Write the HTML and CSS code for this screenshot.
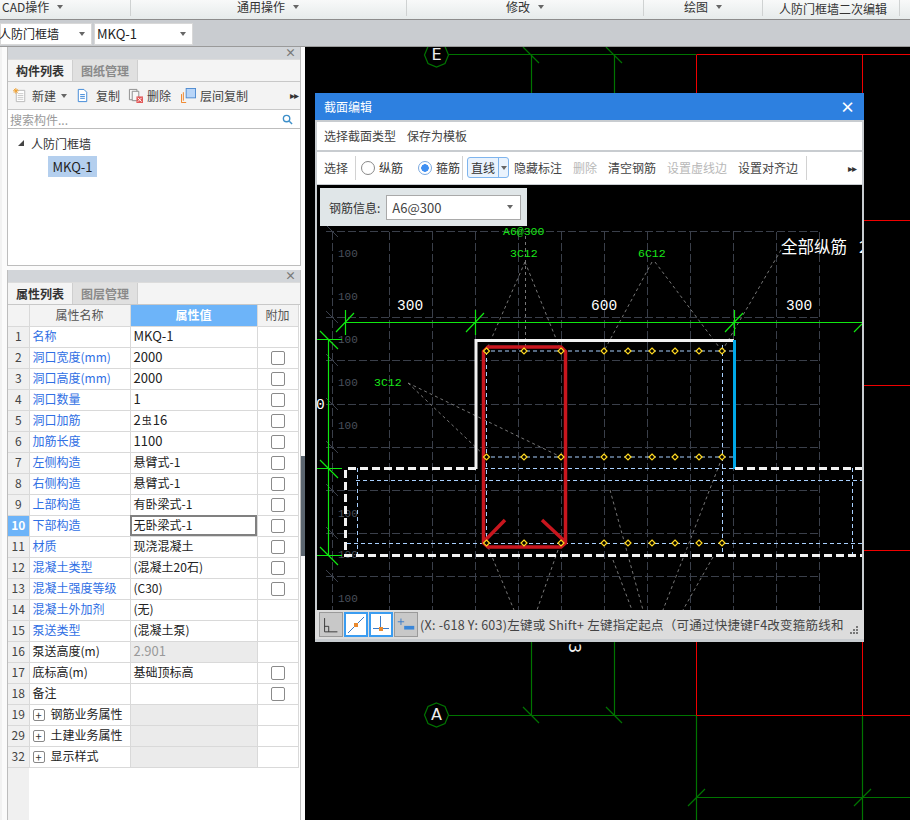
FILE: index.html
```html
<!DOCTYPE html>
<html lang="zh-CN">
<head>
<meta charset="utf-8">
<title>人防门框墙二次编辑</title>
<link rel="stylesheet" href="styles.css">
</head>
<body>
<div class="ribbon">
  <div class="rib rib-a"><span>CAD操作</span><i class="caret"></i></div>
  <div class="rib rib-b"><span>通用操作</span><i class="caret"></i></div>
  <div class="rib rib-c"><span>修改</span><i class="caret"></i></div>
  <div class="rib rib-d"><span>绘图</span><i class="caret"></i></div>
  <div class="rib rib-e"><span>人防门框墙二次编辑</span></div>
</div>
<div class="selectors">
  <div class="sel sel-type"><span>人防门框墙</span><i class="caret"></i></div>
  <div class="sel sel-name"><span>MKQ-1</span><i class="caret"></i></div>
</div>
<div class="main">
  <aside class="side">
    <section class="panel panel-top">
      <div class="panel-title"><span class="x">×</span></div>
      <div class="tabs"><div class="tab on">构件列表</div><div class="tab">图纸管理</div></div>
      <div class="tools">
        <div class="tool t-new">
          <svg class="ico" viewBox="0 0 16 16"><path class="doc" d="M3.500 2.500h9v12h-9z"/><path class="docl" d="M5 6h6M5 8h6M5 10h6M5 12h6"/><path class="star" d="M3 0v6M0 3h6M1 1l4 4M5 1l-4 4"/></svg>
          <span>新建</span><i class="caret"></i>
        </div>
        <div class="tool t-copy">
          <svg class="ico" viewBox="0 0 16 16"><path class="blue" d="M3.500 1.500h6l3 3v10h-9z"/><path class="blue" d="M5.500 7h5M5.500 9h5M5.500 11h5"/></svg>
          <span>复制</span>
        </div>
        <div class="tool t-del">
          <svg class="ico" viewBox="0 0 16 16"><path class="grayl" d="M1.500 1.500h8v11h-8z"/><path class="grayl" d="M4.500 3.500h7v10h-7z"/><rect class="redb" x="9" y="9" width="7" height="7"/><path class="wh" d="M10.500 10.500l4 4M14.500 10.500l-4 4"/></svg>
          <span>删除</span>
        </div>
        <div class="tool t-floor">
          <svg class="ico" viewBox="0 0 16 16"><path class="orange" d="M.5 15.500h5M.5 15.500v-9M2.500 13.500v-9"/><rect class="lblue" x="5.500" y=".5" width="10" height="10"/></svg>
          <span>层间复制</span>
        </div>
        <div class="more">▸▸</div>
      </div>
      <div class="search"><span>搜索构件...</span>
        <svg class="lens" viewBox="0 0 12 12"><circle cx="5" cy="5" r="3.500"/><path d="M8 8l3 3"/></svg>
      </div>
      <div class="tree">
        <div class="node"><i class="tri"></i><span>人防门框墙</span></div>
        <div class="leaf">MKQ-1</div>
      </div>
    </section>
    <section class="panel panel-bottom">
      <div class="panel-title"><span class="x">×</span></div>
      <div class="tabs"><div class="tab on">属性列表</div><div class="tab">图层管理</div></div>
      <table class="props">
        <colgroup><col class="c1"><col class="c2"><col class="c3"><col class="c4"></colgroup>
        <thead><tr><th class="n"></th><th>属性名称</th><th class="cur">属性值</th><th>附加</th></tr></thead>
        <tbody>
          <tr><td class="n">1</td><td class="k">名称</td><td class="num">MKQ-1</td><td></td></tr>
          <tr><td class="n">2</td><td class="k">洞口宽度(mm)</td><td class="num">2000</td><td><i class="cb"></i></td></tr>
          <tr><td class="n">3</td><td class="k">洞口高度(mm)</td><td class="num">2000</td><td><i class="cb"></i></td></tr>
          <tr><td class="n">4</td><td class="k">洞口数量</td><td class="num">1</td><td><i class="cb"></i></td></tr>
          <tr><td class="n">5</td><td class="k">洞口加筋</td><td class="num">2<span class="rebar">虫</span>16</td><td><i class="cb"></i></td></tr>
          <tr><td class="n">6</td><td class="k">加筋长度</td><td class="num">1100</td><td><i class="cb"></i></td></tr>
          <tr><td class="n">7</td><td class="k">左侧构造</td><td>悬臂式-1</td><td><i class="cb"></i></td></tr>
          <tr><td class="n">8</td><td class="k">右侧构造</td><td>悬臂式-1</td><td><i class="cb"></i></td></tr>
          <tr><td class="n">9</td><td class="k">上部构造</td><td>有卧梁式-1</td><td><i class="cb"></i></td></tr>
          <tr><td class="n act">10</td><td class="k">下部构造</td><td class="edit">无卧梁式-1</td><td><i class="cb"></i></td></tr>
          <tr><td class="n">11</td><td class="k">材质</td><td>现浇混凝土</td><td><i class="cb"></i></td></tr>
          <tr><td class="n">12</td><td class="k">混凝土类型</td><td>(混凝土20石)</td><td><i class="cb"></i></td></tr>
          <tr><td class="n">13</td><td class="k">混凝土强度等级</td><td>(C30)</td><td><i class="cb"></i></td></tr>
          <tr><td class="n">14</td><td class="k">混凝土外加剂</td><td>(无)</td><td></td></tr>
          <tr><td class="n">15</td><td class="k">泵送类型</td><td>(混凝土泵)</td><td></td></tr>
          <tr><td class="n">16</td><td>泵送高度(m)</td><td class="off num">2.901</td><td></td></tr>
          <tr><td class="n">17</td><td>底标高(m)</td><td>基础顶标高</td><td><i class="cb"></i></td></tr>
          <tr><td class="n">18</td><td>备注</td><td></td><td><i class="cb"></i></td></tr>
          <tr><td class="n">19</td><td><i class="plus">+</i>钢筋业务属性</td><td class="off"></td><td></td></tr>
          <tr><td class="n">29</td><td><i class="plus">+</i>土建业务属性</td><td class="off"></td><td></td></tr>
          <tr><td class="n">32</td><td><i class="plus">+</i>显示样式</td><td class="off"></td><td></td></tr>
        </tbody>
      </table>
      <div class="fill"></div>
    </section>
    <div class="splitter"></div>
  </aside>
  <div class="cad">
    <svg class="plan" viewBox="305 47 605 773" width="605" height="773">
      <path class="dg" d="M449 54.500H696.500M531.500 55V93M614.500 55V93M523 47l16 16M606 47l16 16"/>
      <path class="dg" d="M531.500 641V715M614.500 641V715M449 715.500H696.500M523 707l16 16M606 707l16 16"/>
      <path class="dg" d="M696.500 715V820M862.500 715V820M696 797.500H910M688 806l17-17M854 806l17-17"/>
      <path class="rd" d="M696.500 54.500H910M696.500 55V93M862.500 55V93M864 220.500H910M864 385.500H910M864 550.500H910M696.500 641V715M862.500 641V715M696.500 715.500H910"/>
      <path class="dg" d="M436.500 43l8.500 3.500 3.500 8.500-3.500 8.500-8.500 3.500-8.500-3.500-3.500-8.500 3.500-8.500z"/>
      <path class="dg" d="M436.500 703l8.500 3.500 3.500 8.500-3.500 8.500-8.500 3.500-8.500-3.500-3.500-8.500 3.500-8.500z"/>
      <text class="axis" x="436.500" y="60">E</text>
      <text class="axis" x="436.500" y="720">A</text>
      <text class="axis three" transform="translate(569 648) rotate(90)">3</text>
    </svg>
    <div class="dialog">
      <div class="dlg-title"><span>截面编辑</span><span class="dlg-x">×</span></div>
      <div class="dlg-menu"><span class="btn">选择截面类型</span><span class="btn">保存为模板</span></div>
      <div class="dlg-tools">
        <span class="btn b-sel">选择</span><i class="sep"></i>
        <label class="radio r1"><i class="rd-i"></i>纵筋</label>
        <label class="radio r2"><i class="rd-i on"></i>箍筋</label><i class="sep"></i>
        <span class="split"><span class="split-l">直线</span><span class="split-r"><i class="caret"></i></span></span>
        <span class="btn">隐藏标注</span>
        <span class="btn dis">删除</span>
        <span class="btn">清空钢筋</span>
        <span class="btn dis">设置虚线边</span>
        <span class="btn">设置对齐边</span><i class="sep s-last"></i>
        <span class="more dlg-more">▸▸</span>
      </div>
      <div class="dlg-canvas">
        <svg class="sec" viewBox="317 185 545 425" width="545" height="425">
          <path class="grid" d="M326 231.500H820M326 317.500H820M326 360.500H820M326 404.500H820M326 447.500H820M326 490.500H820M326 533.500H820M326 576.500H820"/>
          <path class="grid" d="M332.500 232V610M389.500 232V610M432.500 232V610M475.500 232V610M518.500 232V610M561.500 232V610M604.500 232V610M647.500 232V610M690.500 232V610M733.500 232V610M776.500 232V610M819.500 232V610"/>
          <path class="tick" d="M326 225l12 12M326 311l12 12M326 354l12 12M326 398l12 12M326 441l12 12M326 484l12 12M326 527l12 12M326 570l12 12"/>
          <text class="gray" x="338" y="257">100</text>
          <text class="gray" x="338" y="300">100</text>
          <text class="gray" x="338" y="343">100</text>
          <text class="gray" x="338" y="386">100</text>
          <text class="gray" x="338" y="429">100</text>
          <text class="gray" x="338" y="517">100</text>
          <text class="gray" x="338" y="558">100</text>
          <text class="gray" x="338" y="602">100</text>
          <path class="lead" d="M525.500 236V351M525 262L486 351M525 262L561 351M652 262L604 351M655 262L722 351M781 250L722 351M408 383L486 457M408 383L561 457"/>
          <path class="lead" d="M488 547L514 610M558 550L537 610M613 560L632 610M610 490L643 610M720 463L663 610M713 557L683 610"/>
          <path class="bright" d="M345 322.500H862M345.500 310V335M336 332l18-19M475.500 310V335M466 332l18-19M734.500 310V336M725 332l18-19M854 332l8-8"/>
          <path class="bright" d="M328.500 339V555M317 339.500H342M320 331l18 18M317 468.500H342M320 460l18 18M317 555.500H342M320 547l18 18"/>
          <path class="rebar-line" d="M484 351H733M484 457H733M486.500 351V543M722.500 345V555M356 480.500H862M347 543.500H862M357.500 468V555M852.500 468V555M484 468.500H735"/>
          <path class="wall" d="M476 469V340.500H734"/>
          <path class="wall-b" d="M734.500 340V469"/>
          <path class="wall-d" d="M476 468.500H345.500V555.500H862M735 468.500H862"/>
          <path class="hoop" d="M488 347H561L565.500 351.500V543L561 547H488L483.500 543V351.500zM483.500 542L505 520M565.500 542L542 520"/>
          <g class="dots">
            <path d="M486.500 348l3 3-3 3-3-3z"/>
            <path d="M524 348l3 3-3 3-3-3zM561 348l3 3-3 3-3-3zM604 348l3 3-3 3-3-3zM628 348l3 3-3 3-3-3zM652 348l3 3-3 3-3-3zM675 348l3 3-3 3-3-3zM699 348l3 3-3 3-3-3zM722 348l3 3-3 3-3-3z"/>
            <path d="M486.500 454l3 3-3 3-3-3zM524 454l3 3-3 3-3-3zM561 454l3 3-3 3-3-3zM604 454l3 3-3 3-3-3zM628 454l3 3-3 3-3-3zM652 454l3 3-3 3-3-3zM675 454l3 3-3 3-3-3zM699 454l3 3-3 3-3-3zM722 454l3 3-3 3-3-3z"/>
            <path d="M486.500 540l3 3-3 3-3-3zM524 540l3 3-3 3-3-3zM561 540l3 3-3 3-3-3zM604 540l3 3-3 3-3-3zM628 540l3 3-3 3-3-3zM652 540l3 3-3 3-3-3zM675 540l3 3-3 3-3-3zM699 540l3 3-3 3-3-3zM722 540l3 3-3 3-3-3z"/>
          </g>
          <text class="lime" x="503" y="235">A6@300</text>
          <text class="lime" x="510" y="257">3C12</text>
          <text class="lime" x="638" y="257">6C12</text>
          <text class="lime" x="374" y="386">3C12</text>
          <text class="white" x="397" y="310">300</text>
          <text class="white" x="591" y="310">600</text>
          <text class="white" x="786" y="310">300</text>
          <text class="white" x="316" y="409">0</text>
          <text class="label" x="781" y="253">全部纵筋<tspan x="859">2</tspan></text>
        </svg>
        <div class="info">
          <span>钢筋信息:</span>
          <div class="info-sel"><span>A6@300</span><i class="caret"></i></div>
        </div>
      </div>
      <div class="status">
        <div class="snap">
          <svg viewBox="0 0 24 25"><path d="M5 5.500V20.500H19M5 14.500H9.500V20.500"/></svg>
        </div>
        <div class="snap on">
          <svg viewBox="0 0 20 21"><path class="line-b" d="M2 19L18 3"/><rect class="orng" x="8" y="9" width="4" height="4"/></svg>
        </div>
        <div class="snap on">
          <svg viewBox="0 0 20 21"><path class="line-b" d="M2 14.500H18M9.500 2V13"/><rect class="orng" x="8" y="13" width="4" height="4"/></svg>
        </div>
        <div class="snap">
          <svg viewBox="0 0 24 25"><path class="line-b" d="M3 9.500H10M6.500 6V13"/><rect class="blk" x="10" y="14" width="11" height="4"/></svg>
        </div>
        <div class="status-text">(X: -618 Y: 603)左键或 Shift+ 左键指定起点（可通过快捷键F4改变箍筋线和纵筋线的绘制方式）</div>
        <svg class="grip" viewBox="0 0 8 8"><path d="M6 0h2v2H6zM3 3h2v2H3zM6 3h2v2H6zM0 6h2v2H0zM3 6h2v2H3zM6 6h2v2H6z"/></svg>
      </div>
    </div>
  </div>
</div>
</body>
</html>
```
FILE: styles.css
```css
* { box-sizing: border-box; }
html, body { margin: 0; padding: 0; }
body {
  width: 910px; height: 820px; overflow: hidden; background: #000;
  font-family: "Noto Sans CJK SC", "Noto Sans", sans-serif; font-size: 12px; color: #333;
  display: flex; flex-direction: column;
}
i { font-style: normal; }
.caret { display: inline-block; width: 0; height: 0; border-left: 3.5px solid transparent; border-right: 3.5px solid transparent; border-top: 4px solid #666; }

.ribbon { height: 20px; flex: none; display: flex; background: linear-gradient(#f8f9f9, #e6ebeb); border-bottom: 1px solid #8c8c8c; }
.rib { height: 16px; display: flex; gap: 8px; align-items: flex-start; border-right: 1px solid #cfd2d2; color: #333; white-space: nowrap; line-height: 12px; }
.rib span { margin-top: 1px; }
.rib .caret { margin-top: 5px; }
.rib-a { width: 131px; padding-left: 2px; }
.rib-b { width: 276px; padding-left: 106px; }
.rib-c { width: 237px; padding-left: 99px; }
.rib-d { width: 119px; padding-left: 40px; }
.rib-e { width: 137px; padding-left: 16px; }
.rib-e span { margin-top: 3px; }

.selectors { height: 27px; flex: none; display: flex; gap: 2px; padding-top: 3px; background: #c9ccd0; border-bottom: 1px solid #9a9a9a; }
.sel { height: 22px; background: #fff; display: flex; align-items: center; justify-content: space-between; padding: 0 6px 2px 0; border: 1px solid #d8d8d8; white-space: nowrap; color: #222; }
.sel .caret { margin-top: 2px; }
.sel-type { width: 92px; }
.sel-type span { margin-left: -2px; }
.sel-name { width: 99px; padding-left: 2px; font-size: 13px; }

.main { flex: 1; display: flex; min-height: 0; }
.side { position: relative; width: 305px; flex: none; background: #fbfbfb; padding: 0 4px 0 5px; display: flex; flex-direction: column; gap: 4px; border-left: 2px solid #f2f2f2; }
.splitter { position: absolute; right: 0; top: 409px; width: 4px; height: 100px; background: #5c6670; }
.panel { border: solid #bdbdbd; border-width: 0 1px; background: #fff; display: flex; flex-direction: column; }
.panel-top { height: 219px; flex: none; border-bottom: 1px solid #bdbdbd; }
.panel-bottom { flex: 1; min-height: 0; }
.panel-title { height: 12px; flex: none; background: #d2d5d9; position: relative; }
.x { position: absolute; right: 4px; top: -1px; font-size: 11px; line-height: 13px; color: #777; font-weight: 700; }
.tabs { height: 23px; flex: none; display: flex; background: #f4f4f4; border-bottom: 1px solid #c8c8c8; border-top: 1px solid #dcdcdc; }
.tab { width: 65px; text-align: center; line-height: 21px; background: #e0e0e0; color: #8a8a8a; border-right: 1px solid #cfcfcf; font-weight: 700; }
.tab.on { background: #f4f4f4; color: #333; }
.tools { height: 28px; flex: none; display: flex; align-items: center; background: #f3f3f3; border-bottom: 1px solid #c8c8c8; position: relative; color: #444; }
.tool { display: flex; align-items: center; gap: 4px; white-space: nowrap; }
.t-new { margin-left: 5px; }
.t-new .caret { margin-left: 1px; }
.t-copy { margin-left: 8px; gap: 6px; }
.t-del { margin-left: 8px; }
.t-floor { margin-left: 10px; }
.ico { width: 15px; height: 15px; fill: none; display: block; flex: none; }
.doc { stroke: #b9b9b9; fill: #fff; }
.docl { stroke: #c9c9c9; }
.star { stroke: #f0a030; }
.blue { stroke: #3d86d6; fill: #fff; }
.grayl { stroke: #8b8b8b; fill: #f6f6f6; }
.redb { fill: #e25a5a; }
.wh { stroke: #fff; }
.orange { stroke: #f08020; }
.lblue { stroke: #4d8ad0; fill: #b8d5f8; }
.more { position: absolute; right: 2px; top: 8px; font-size: 10px; letter-spacing: -1px; line-height: 10px; color: #333; }
.search { height: 19px; flex: none; display: flex; align-items: center; justify-content: space-between; padding: 0 7px 0 2px; border-bottom: 1px solid #bdbdbd; color: #9a9a9a; background: #fff; }
.lens { width: 11px; height: 11px; fill: none; stroke: #3d8fc9; stroke-width: 1.500; }
.tree { flex: 1; background: #fff; padding-top: 4px; color: #333; }
.node { display: flex; align-items: center; height: 20px; padding-left: 10px; gap: 7px; }
.tri { width: 0; height: 0; border-bottom: 6px solid #444; border-left: 6px solid transparent; }
.leaf { margin: 3px 0 0 40px; width: 49px; height: 21px; line-height: 21px; text-align: center; background: #b4cfee; color: #222; font-size: 13px; }

.props { width: 290px; border-collapse: collapse; table-layout: fixed; flex: none; }
.c1 { width: 21px; } .c2 { width: 101px; } .c3 { width: 127px; } .c4 { width: 41px; }
.props th, .props td { height: 21px; padding: 0 0 1px 3px; border: 1px solid #d9d9d9; border-top: 0; font-weight: 400; white-space: nowrap; overflow: hidden; line-height: 18px; color: #222; }
.props th { background: #f3f3f3; text-align: center; padding: 0 0 1px; color: #555; }
.props th.cur { background: #6db4f9; color: #fff; font-weight: 700; }
.props td.n { background: #f0f0f0; text-align: center; padding: 0 0 1px; color: #444; border-left: 0; }
.props th.n { border-left: 0; }
.props td.act { background: #6db4f9; color: #fff; font-weight: 700; }
.props td.k { color: #2f6fe4; }
.props td.num { font-size: 13px; }
.props td.off { background: #ebebeb; color: #999; }
.props td.edit { outline: 2px solid #808080; outline-offset: -2px; }
.props td:last-child { text-align: center; padding: 0; }
.rebar { font-size: 10px; vertical-align: 1px; margin: 0 1px; }
.cb { display: block; width: 14px; height: 14px; margin: 0 auto; border: 1px solid #8a8a8a; border-radius: 2px; background: #fff; }
.plus { display: inline-block; width: 12px; height: 12px; margin-right: 6px; border: 1px solid #888; border-radius: 2px; text-align: center; line-height: 10px; font-size: 11px; color: #333; vertical-align: -1px; }
.fill { flex: 1; width: 21px; background: #f0f0f0; }

.cad { position: relative; flex: 1; background: #000; overflow: hidden; }
.plan { display: block; }
.plan path { fill: none; }
.dg { stroke: #007400; stroke-width: 1.200; }
.rd { stroke: #f00000; stroke-width: 1; }
.axis { font-family: "DejaVu Sans", sans-serif; font-size: 16px; fill: #eee; text-anchor: middle; }

.dialog { position: absolute; left: 10px; top: 46px; width: 549px; height: 549px; background: #c8ccd0; display: flex; flex-direction: column; padding-bottom: 3px; }
.dlg-title { height: 27px; flex: none; background: #2d80e0; color: #fff; display: flex; align-items: center; justify-content: space-between; padding: 0 9px; }
.dlg-x { font-size: 15px; line-height: 15px; font-weight: 700; }
.dlg-menu { height: 28px; flex: none; margin: 2px 2px 0; background: #fff; display: flex; align-items: center; padding-left: 2px; gap: 1px; }
.btn { padding: 3px 5px; color: #444; white-space: nowrap; border-radius: 3px; line-height: 16px; }
.btn.dis { color: #b8b8b8; }
.dlg-tools { position: relative; height: 33px; flex: none; margin: 2px 2px 0; padding: 0 0 1px 2px; background: #fff; display: flex; align-items: center; gap: 1px; border-bottom: 1px solid #c8ccd0; }
.sep { width: 1px; height: 24px; background: #d2d2d2; flex: none; }
.b-sel { margin-right: 1px; }
.radio { display: flex; align-items: center; gap: 4px; color: #333; }
.r1 { margin: 0 14px 0 4px; }
.r2 { margin-right: 1px; }
.rd-i { width: 14px; height: 14px; border: 1px solid #888; border-radius: 50%; background: #fff; display: block; }
.rd-i.on { border-color: #7aa8e0; background: radial-gradient(circle, #3f8ff2 0 3.500px, #fff 4px); }
.split { display: flex; height: 21px; margin: 0 -1px 0 3px; border: 1px solid #7fb5ee; border-radius: 3px; background: #eaf3fd; color: #333; line-height: 19px; }
.split-l { width: 30px; text-align: center; }
.split-r { width: 10px; border-left: 1px solid #7fb5ee; display: flex; align-items: center; justify-content: center; }
.split-r .caret { border-left-width: 3px; border-right-width: 3px; }
.s-last { margin-left: 2px; }
.dlg-more { top: 11px; right: 6px; }
.dlg-canvas { position: relative; flex: 1; min-height: 0; margin: 0 2px; background: #000; overflow: hidden; }
.sec { display: block; }
.sec path { fill: none; }
.grid { stroke: #3a3f4a; stroke-dasharray: 8 3; }
.tick { stroke: #3a3f4a; }
.gray { font-family: "Liberation Mono", monospace; font-size: 11px; fill: #4a505c; }
.lime { font-family: "Liberation Mono", monospace; font-size: 11.500px; fill: #19e619; }
.white { font-family: "Liberation Mono", monospace; font-size: 14.500px; fill: #fff; }
.label { font-family: "Noto Sans CJK SC", sans-serif; font-size: 16.500px; fill: #fff; }
.lead { stroke: #777; stroke-dasharray: 3 3; }
.bright { stroke: #10e810; stroke-width: 1.200; }
.rebar-line { stroke: #a8d0ff; stroke-dasharray: 4 3; }
.wall { stroke: #f2f2f2; stroke-width: 3; }
.wall-b { stroke: #00a8e8; stroke-width: 3; }
.wall-d { stroke: #f2f2f2; stroke-width: 3; stroke-dasharray: 8 4; }
.hoop { stroke: #c8161e; stroke-width: 3.500; }
.dots path { stroke: #ffd820; stroke-width: 1.200; fill: #000; }
.info { position: absolute; left: 3px; top: 3px; width: 207px; height: 38px; background: #e0e6e8; display: flex; align-items: center; padding-left: 9px; gap: 6px; color: #333; }
.info-sel { width: 135px; height: 25px; background: #fff; border: 1px solid #a9a9a9; display: flex; align-items: center; justify-content: space-between; padding: 0 7px 0 5px; font-size: 13px; color: #444; }
.status { position: relative; height: 29px; flex: none; background: #dcdcdc; display: flex; align-items: center; padding: 0 0 0 4px; gap: 1px; }
.snap { width: 24px; height: 25px; flex: none; background: #c8c8c8; border: 1px solid #9a9a9a; }
.snap.on { background: #fff; border: 2px solid #3a9cf0; }
.snap svg { display: block; width: 100%; height: 100%; fill: none; stroke: #333; }
.line-b { stroke: #3a7cc8; }
.orng { fill: #e88a30; stroke: none; }
.blk { fill: #3a86d8; stroke: none; }
.status-text { width: 423px; margin-left: 1px; white-space: nowrap; overflow: hidden; color: #444; font-size: 12.500px; letter-spacing: .25px; }
.grip { position: absolute; right: 6px; bottom: 5px; width: 8px; height: 8px; fill: #777; }
```
